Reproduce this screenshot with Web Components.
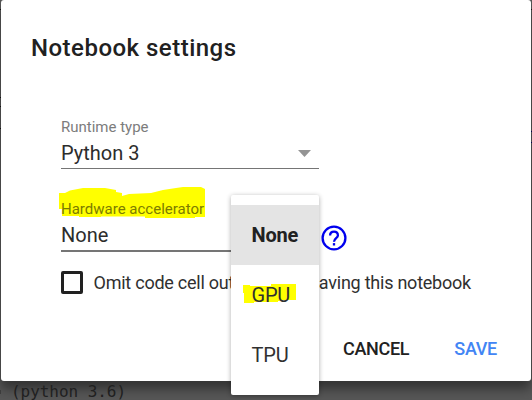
<!DOCTYPE html>
<html lang="en">
<head>
<meta charset="utf-8">
<title>Notebook settings</title>
<style>
html, body { margin: 0; width: 532px; height: 400px; overflow: hidden; background: #575757; }
body { font-family: Roboto, "Liberation Sans", sans-serif; color: #212121; }
</style>
</head>
<body>
<notebook-page>
  <settings-dialog heading="Notebook settings">
    <select-field label="Runtime type" value="Python 3" arrow></select-field>
    <select-field label="Hardware accelerator" value="None" open></select-field>
    <check-option>Omit code cell output when saving this notebook</check-option>
    <text-button slot="actions">CANCEL</text-button>
    <text-button slot="actions" class="primary">SAVE</text-button>
  </settings-dialog>
  <option-menu slot="menu">
    <menu-option selected>None</menu-option>
    <menu-option marked>GPU</menu-option>
    <menu-option>TPU</menu-option>
  </option-menu>
  <span slot="code">(python 3.6)</span>
</notebook-page>
<script>
const define = (name, html) => customElements.define(name, class extends HTMLElement {
  constructor() {
    super();
    this.attachShadow({ mode: 'open' }).innerHTML = html;
  }
  connectedCallback() {
    this.shadowRoot.querySelectorAll('[data-text]').forEach(node => {
      node.textContent = this.getAttribute(node.dataset.text) || '';
    });
  }
});

define('notebook-page', `
<style>
:host { display: flex; flex-direction: column; position: relative; width: 532px; height: 400px; overflow: hidden; background: #575757; }
.code { display: block; position: relative; padding: 1px 0 0 11px; font: 16px/20px "DejaVu Sans Mono", monospace; letter-spacing: -.05px; color: #202020; white-space: pre; }
.edge { position: absolute; width: 1px; height: 1px; background: #111; }
.menu { position: absolute; left: 231px; top: 195px; z-index: 2; }
</style>
<slot></slot>
<div class="code"><slot name="code"></slot></div>
<div class="menu"><slot name="menu"></slot></div>
<i class="edge" style="left:0;top:9px"></i><i class="edge" style="left:0;top:97px"></i>
<i class="edge" style="left:0;top:106px"></i><i class="edge" style="left:0;top:128px"></i>
<i class="edge" style="left:0;top:390px;height:4px;background:#3c3c3c"></i>
<i class="edge" style="left:531px;top:9px"></i>
<i class="edge" style="left:531px;top:131px;background:#000050"></i>
<i class="edge" style="left:531px;top:142px;background:#000050"></i>`);

define('settings-dialog', `
<style>
:host { display: flex; flex-direction: column; box-sizing: border-box; width: 530px; height: 381px; margin-left: 1px; padding: 30px 34px 17px 30px; background: #fff; border-radius: 3px; box-shadow: 0 8px 12px rgba(0,0,0,.42); position: relative; flex: none; }
h2 { margin: 0; font-size: 24px; line-height: 36px; font-weight: 500; letter-spacing: .48px; white-space: nowrap; }
.content { padding: 50px 0 0 30px; flex: 1; }
.actions { display: flex; justify-content: flex-end; gap: 45px; }
</style>
<h2 data-text="heading"></h2>
<div class="content"><slot></slot></div>
<div class="actions"><slot name="actions"></slot></div>`);

define('select-field', `
<style>
:host { display: flex; align-items: center; height: 82px; }
.field { position: relative; width: 258px; height: 82px; }
.label { position: relative; display: block; font-size: 15px; line-height: 22px; color: #7c7c7c; white-space: nowrap; }
.value { display: flex; justify-content: space-between; align-items: center; box-sizing: border-box; height: 31px; padding-right: 8px; font-size: 20px; line-height: 30px; color: #2c2c2c; border-bottom: 1px solid #757575; }
.arrow, .mark, .help { display: none; }
:host([arrow]) .arrow { display: block; }
:host([open]) .value { border-bottom-width: 2px; height: 32px; }
:host([open]) .label { color: #7c7c00; }
:host([open]) .mark { display: block; position: absolute; left: -2px; top: -11px; }
:host([open]) .help { display: block; margin: -3px 0 0 2px; }
</style>
<div class="field">
  <svg class="mark" width="147" height="32" viewBox="0 0 147 32"><path fill="#ff0" d="M0 6H6L11 3.5L24 1H46L57 3V5L63 6V9L70 7L92 6L104 3L117 1L124 0H142L146 2V30H136V31H86V29.5H42V30H20V29H3V22H0Z"/></svg>
  <span class="label" data-text="label"></span>
  <div class="value"><span data-text="value"></span><svg class="arrow" width="13" height="7" viewBox="0 0 13 7"><path fill="#949494" d="M0 0h13L6.5 7Z"/></svg></div>
</div>
<svg class="help" width="26" height="26" viewBox="0 0 26 26" fill="none" stroke="#0000ee" stroke-width="2.3"><circle cx="13" cy="13" r="11.4"/><path d="M9.1 10.4C9.1 8 10.8 6.7 13 6.7s3.9 1.4 3.9 3.7c0 2.6-3.9 3-3.9 6.4"/><path d="M13 18.1v2.4"/></svg>`);

define('check-option', `
<style>
:host { display: flex; align-items: center; gap: 10.5px; height: 24px; margin-top: -10px; font-size: 18px; line-height: 24px; letter-spacing: -.24px; white-space: nowrap; }
.box { box-sizing: border-box; flex: none; width: 22px; height: 23px; border: 3px solid #212121; border-radius: 2px; }
.text { margin-top: 1px; color: #303030; }
</style>
<span class="box"></span><span class="text"><slot></slot></span>`);

define('text-button', `
<style>
:host { display: block; font-size: 18px; line-height: 30px; font-weight: 500; letter-spacing: -.3px; }
:host(.primary) { color: #4285f4; }
</style><slot></slot>`);

define('option-menu', `
<style>
:host { display: flex; flex-direction: column; box-sizing: border-box; width: 88px; height: 200px; padding: 10px 0; background: #fff; border-radius: 2px; box-shadow: 0 1px 5px rgba(0,0,0,.32); }
</style><slot></slot>`);

define('menu-option', `
<style>
:host { display: flex; align-items: center; position: relative; box-sizing: border-box; height: 60px; padding-left: 20.5px; font-size: 20px; line-height: 30px; color: #303030; }
:host([selected]) { background: #e4e4e4; color: #212121; font-weight: 700; letter-spacing: -.2px; }
.mark { display: none; }
:host([marked]) .mark { display: block; position: absolute; left: 12px; top: 19px; }
.text { position: relative; letter-spacing: -.2px; }
</style>
<svg class="mark" width="53" height="19" viewBox="0 0 53 19"><path fill="#ff0" d="M0 1h7v1h21V0h25v16H37v1h-2v1H11v1H1V9H0Z"/></svg>
<span class="text"><slot></slot></span>`);
</script>
</body>
</html>
